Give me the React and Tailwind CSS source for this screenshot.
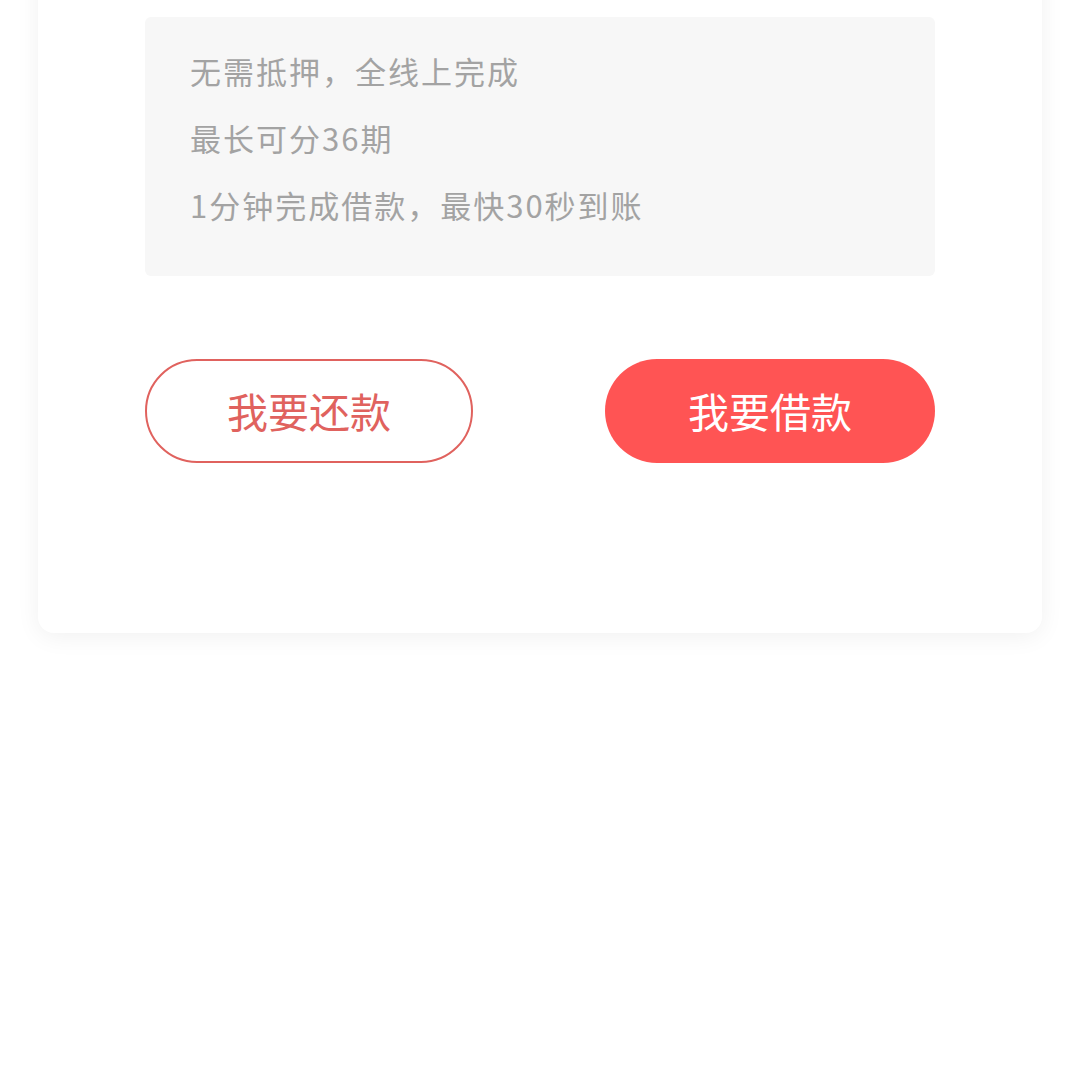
const features = ['无需抵押，全线上完成', '最长可分36期', '1分钟完成借款，最快30秒到账'];

export default function App() {
  return (
    <div
      className="w-[1080px] h-[1080px] bg-white overflow-hidden"
      style={{ fontFamily: '"Noto Sans CJK SC", "Noto Sans", sans-serif' }}
    >
      <div className="mx-[38px] -mt-[40px] pt-[57px] pb-[170px] px-[107px] bg-white rounded-[16px] shadow-[0_4px_24px_rgba(0,0,0,0.06)]">
        <div className="bg-[#f7f7f7] rounded-[6px] pl-[45px] pt-[20px] pb-[38px]">
          {features.map((f) => (
            <div key={f} className="h-[67px] leading-[67px] text-[31px] tracking-[2px] text-[#a3a3a3]">
              {f}
            </div>
          ))}
        </div>
        <div className="flex justify-between mt-[83px]">
          <button className="w-[328px] h-[104px] rounded-full border-[2.5px] border-[#e0625e] text-[#e0625e] text-[41px] leading-none pb-[1px] bg-white">
            我要还款
          </button>
          <button className="w-[330px] h-[104px] rounded-full bg-[#ff5454] text-white text-[41px] leading-none pb-[1px]">
            我要借款
          </button>
        </div>
      </div>
    </div>
  );
}
